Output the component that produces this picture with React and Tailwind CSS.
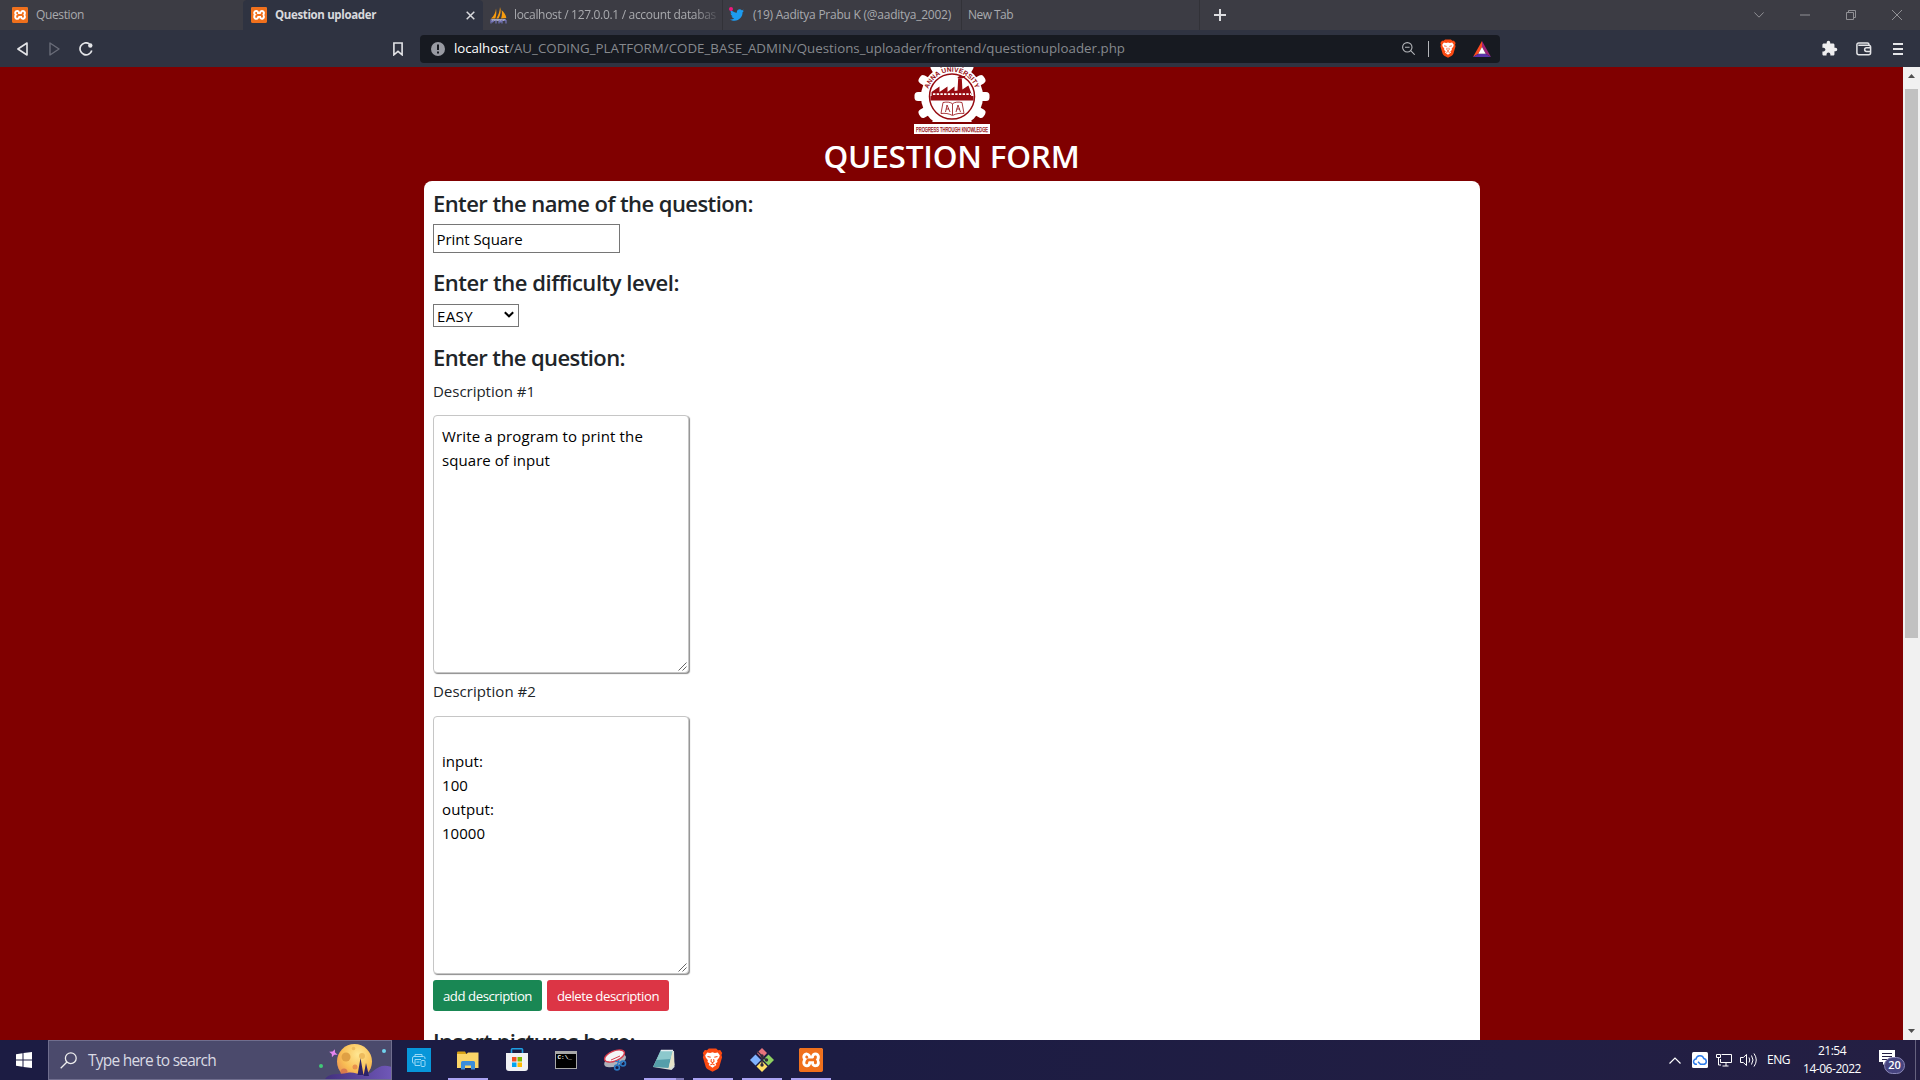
import React, { useLayoutEffect, useRef } from "react";
import { SiXampp } from "react-icons/si";
import { FaTwitter } from "react-icons/fa";
import { MdExtension } from "react-icons/md";

/* A single line of text, tracked so that it spans `w` pixels. */
function Line({ w, className = "", children }) {
  const ref = useRef(null);
  useLayoutEffect(() => {
    const fit = () => {
      const el = ref.current;
      if (!el) return;
      el.style.letterSpacing = "0px";
      const natural = el.getBoundingClientRect().width;
      el.style.letterSpacing = `${(w - natural) / el.textContent.length}px`;
    };
    fit();
    document.fonts.ready.then(fit);
  }, [w]);
  return (
    <span ref={ref} className={`inline-block whitespace-pre ${className}`}>
      {children}
    </span>
  );
}

function XamppIcon({ size }) {
  return (
    <span className="relative flex shrink-0 bg-linear-to-b from-[#f5a060] to-[#ec6a1c] rounded-[2px]">
      <span className="absolute inset-[12%] rounded-[2px] bg-white" />
      <SiXampp size={size} color="#f0701c" className="relative" />
    </span>
  );
}

function BraveIcon({ w, h }) {
  return (
    <svg width={w} height={h} viewBox="0 0 22 26" className="shrink-0">
      <path d="M7 0.5h8l2 2 2.3-.3 2.2 3.3-.8 2.200.7 2.300-3 10.300c-.4 1.200-1.200 2-2.200 2.700L11 25.700 5.800 23c-1-.7-1.800-1.500-2.200-2.700L.6 10l.7-2.300-.8-2.200L2.700 2.200 5 2.500z" fill="#fb4a12" />
      <path d="M11 4.700l2.500.8 3.200-.6 2.200 3-.6 2.400-2.300 3.100.4 1.800-2.200 1.600 1 1.600L11 21.500l-4.200-3.100 1-1.600-2.200-1.600.4-1.800L3.700 10.300 3.100 7.900l2.200-3 3.200.6z" fill="#fff" />
      <path d="M5.600 9.300l3.500.8M16.400 9.300l-3.500.8M9.800 12l-.5 2.500L11 16l1.700-1.500-.5-2.500M8.700 18.400L11 17.200l2.300 1.200" stroke="#fb4a12" strokeWidth="1.100" fill="none" />
    </svg>
  );
}

function SailIcon() {
  return (
    <svg width="17" height="17" viewBox="0 0 17 17" className="shrink-0">
      <path d="M6 1.500C5.800 5 4 9 1 11.500h4.300C6.500 8 6.600 4.500 6 1.500zM10 0c1.500 3.500.5 8-1.500 11.500H6.300C8.500 8 9.800 4 10 0zM11.500 3c2.500 2 4.500 5 4.800 8l-5.300.5c1.200-3 1.200-6 .5-8.500z" fill="#f89c0e" />
      <path d="M1 12.200h15l-1.500 1.500H2z" fill="#c9c9df" />
      <path d="M1 16.500v-3l1.500 1.500L4 13.500M6 13v3.500M9 13.500v3M9 13.500l1.500 1.500 1.500-1.500v3M14 13.500h2v3" stroke="#7474b8" strokeWidth="1.200" fill="none" />
    </svg>
  );
}

function TabStrip() {
  return (
    <div className="flex h-[30px] bg-[#3c3c44] text-[12px] leading-[30px] text-[#a9aaae]">
      <div className="flex w-[243px] items-center pl-3">
        <XamppIcon size={16} />
        <Line w={48} className="ml-2">Question</Line>
      </div>
      <div className="flex w-[240px] items-center rounded-t-[4px] bg-[#2f3341] pl-2 text-[#d8d9dd]">
        <XamppIcon size={16} />
        <Line w={101} className="ml-2 font-bold text-[11.500px]">Question uploader</Line>
        <svg width="9" height="9" viewBox="0 0 9 9" className="ml-[90px]">
          <path d="M.7.7l7.600 7.600M8.300.7L.7 8.300" stroke="#d8d9dd" strokeWidth="1.500" />
        </svg>
      </div>
      <div className="flex w-[239px] items-center pl-[7px]">
        <SailIcon />
        <div className="ml-[7px] w-[206px] overflow-hidden [mask-image:linear-gradient(to_right,black_180px,transparent_208px)]">
          <Line w={202}>localhost / 127.0.0.1 / account databas</Line>
        </div>
      </div>
      <div className="flex w-[239px] items-center border-l border-[#323238] pl-[7px]">
        <div className="relative">
          <FaTwitter size={14} color="#1d9bf0" />
          <span className="absolute -left-px -top-px size-1 rounded-full bg-[#f0187c]" />
        </div>
        <Line w={198} className="ml-[9px]">(19) Aaditya Prabu K (@aaditya_2002)</Line>
      </div>
      <div className="w-[238px] border-l border-[#323238] pl-[6px]">
        <Line w={45}>New Tab</Line>
      </div>
      <div className="flex flex-1 items-center justify-between border-l border-[#323238] pl-[14px] pr-[18px]">
        <svg width="12" height="12" viewBox="0 0 12 12">
          <path d="M6 0v12M0 6h12" stroke="#dcdde0" strokeWidth="2" />
        </svg>
        <div className="flex items-center text-[#909095]">
          <svg width="10" height="6" viewBox="0 0 10 6" className="mr-9" fill="none" stroke="currentColor">
            <path d="M.3.400L5 5.200 9.700.400" />
          </svg>
          <svg width="10" height="2" viewBox="0 0 10 2" className="mr-9">
            <path d="M0 1h10" stroke="currentColor" />
          </svg>
          <svg width="10" height="10" viewBox="0 0 10 10" className="mr-9" fill="none" stroke="currentColor">
            <path d="M.5 2.500h7v7h-7zM2.500 2.500v-2h7v7h-2" />
          </svg>
          <svg width="10" height="10" viewBox="0 0 10 10" fill="none" stroke="currentColor">
            <path d="M0 0l10 10M10 0L0 10" />
          </svg>
        </div>
      </div>
    </div>
  );
}

function Toolbar() {
  return (
    <div className="flex h-[37px] items-center bg-[#2f3341] text-[#e4e5e8]">
      <div className="flex w-[420px] items-center pl-[17px]">
        <svg width="11" height="14" viewBox="0 0 11 14" fill="none" stroke="currentColor" strokeWidth="1.600" strokeLinejoin="round">
          <path d="M10 1v12L.9 7z" />
        </svg>
        <svg width="11" height="14" viewBox="0 0 11 14" className="ml-[21px] text-[#696c78]" fill="none" stroke="currentColor" strokeWidth="1.400" strokeLinejoin="round">
          <path d="M1 1v12L10 7z" />
        </svg>
        <svg width="14" height="14" viewBox="0 0 14 14" className="ml-[19px]" fill="none" stroke="currentColor" strokeWidth="1.700">
          <path d="M10.500 1.900A6 6 0 1 0 12.800 8.500" />
          <circle cx="11.300" cy="3.500" r="2.200" fill="currentColor" stroke="none" />
        </svg>
        <svg width="10" height="14" viewBox="0 0 10 14" className="ml-[300px]" fill="none" stroke="currentColor" strokeWidth="1.600">
          <path d="M.9 1h8.200v11.800L5 9.400.9 12.800z" />
        </svg>
      </div>
      <div className="flex h-7 w-[1080px] items-center rounded-[4px] bg-[#171a21] pl-[11px]">
        <svg width="14" height="14" viewBox="0 0 14 14">
          <circle cx="7" cy="7" r="7" fill="#989aa2" />
          <path d="M7 2.500v5.500M7 9.500v2" stroke="#171a21" strokeWidth="2" />
        </svg>
        <div className="ml-[9px] w-[672px] text-[13.300px] text-[#86898e]">
          <Line w={55} className="text-white">localhost</Line>
          <Line w={616}>/AU_CODING_PLATFORM/CODE_BASE_ADMIN/Questions_uploader/frontend/questionuploader.php</Line>
        </div>
        <svg width="13" height="13" viewBox="0 0 13 13" className="ml-[276px]" fill="none" stroke="#b4b6ba" strokeWidth="1.100">
          <circle cx="5.300" cy="5.300" r="4.700" />
          <path d="M8.700 8.700l4 4M3 5.300h4.600" />
        </svg>
        <span className="ml-[13px] h-4 w-px bg-[#b4b6ba]" />
        <span className="ml-[11px]"><BraveIcon w={16} h={19} /></span>
        <svg width="18" height="16" viewBox="0 0 17 15" className="ml-[17px]">
          <path d="M8.500 0L0 15l5-3 3.500-6.500z" fill="#ff4b20" />
          <path d="M8.500 0L17 15l-5-3-3.500-6.500z" fill="#9e2376" />
          <path d="M0 15h17l-5-3H5z" fill="#5a32a8" />
          <path d="M8.500 5.500L5 12h7z" fill="#fff" />
        </svg>
      </div>
      <div className="flex flex-1 items-center pl-[321px]">
        <MdExtension size={17} color="#eeeeef" />
        <svg width="16" height="14" viewBox="0 0 16 14" className="ml-[18px]" fill="none" stroke="currentColor" strokeWidth="1.500">
          <path d="M13 3.200V2.500A1.600 1.600 0 0 0 11.400 1H2.600A1.700 1.700 0 0 0 .9 2.700v8.100a2 2 0 0 0 2 2h9.700a2 2 0 0 0 2-2V5.200a2 2 0 0 0-2-2H2.300M15 5.700h-4.500a1.800 1.800 0 0 0 0 3.700H15" />
        </svg>
        <svg width="10" height="12" viewBox="0 0 10 12" className="ml-[21px]">
          <path d="M0 1h10M0 6h10M0 11h10" stroke="currentColor" strokeWidth="1.800" />
        </svg>
      </div>
    </div>
  );
}

const TEETH = [30, 60, 90, 120, 150, 180, 210, 240, 270, 300, 330, 0];

function UniversityLogo() {
  return (
    <svg width="76" height="67" viewBox="0 0 76 67" className="mx-auto block overflow-hidden">
      <defs>
        <path id="crest-arc" d="M14.200 22.500A24.800 24.800 0 0 1 61.800 22.500" />
      </defs>
      {TEETH.map((a) => (
        <rect key={a} x="33.500" y="-8" width="9" height="14" rx="3.500" fill="#fff" transform={`rotate(${a} 38 29.500)`} />
      ))}
      <circle cx="38" cy="29.500" r="31" fill="#fff" />
      <circle cx="38" cy="29.500" r="22.500" fill="#fff" stroke="#960a10" strokeWidth="1.500" />
      <path d="M17.500 25l8-5.500V25l8-5.500V25l7-5.500V24l3-.5.700-12h3.600l.6 11 6-4 3 8-.5 4.500H17.500z" fill="#960a10" />
      <path d="M43.500 11c1-3.500 5-1.500 8-2-1 2.500-5 2.500-7 2.500z" fill="#960a10" />
      <path d="M19 27.200h38" stroke="#fff" strokeWidth="1.800" strokeDasharray="2.400 1.300" />
      <path d="M16.500 29h43v4.500h-43z" fill="#960a10" />
      <path d="M29 35.500c4-.8 7-.5 9.500 1.200 2.500-1.700 5.500-2 9.500-1.200l2 11c-4-.5-8 0-11.500 2C35 46.500 31 46 27 46.500zM38.500 37v11M31.500 45l1.500-7 3 7M32 42h3M42 45l2-7 2.500 7M42.500 42h3.500" fill="none" stroke="#960a10" strokeWidth=".8" />
      <text fill="#960a10" fontSize="6.600" fontWeight="700" fontFamily="Liberation Sans, sans-serif">
        <textPath href="#crest-arc" startOffset="0.500" textLength="62">ANNA UNIVERSITY</textPath>
      </text>
      <path d="M0 55h76v2H0z" fill="#800000" />
      <rect y="57" width="76" height="10" fill="#fff" />
      <text x="2" y="64.500" fill="#960a10" stroke="#960a10" strokeWidth=".25" fontSize="7" textLength="72" lengthAdjust="spacingAndGlyphs" fontFamily="Liberation Sans, sans-serif">
        PROGRESS THROUGH KNOWLEDGE
      </text>
    </svg>
  );
}

function Heading({ w, className = "", children }) {
  return (
    <h4 className={`h-[30px] pl-[0.5px] text-[22px] leading-[30px] font-semibold ${className}`}>
      <Line w={w}>{children}</Line>
    </h4>
  );
}

function DescriptionBox({ className = "", children }) {
  return (
    <div className={`relative h-[258px] w-[256px] rounded-[4px] border border-[#c6c6c6] bg-white px-[8.500px] py-2 text-[15px] leading-6 text-black shadow-[1px_1px_1px_#8c8c8c] ${className}`}>
      {children}
      <svg width="9" height="9" viewBox="0 0 9 9" className="absolute bottom-px right-px" stroke="#555" strokeWidth=".9">
        <path d="M.5 8.500l8-8M4.500 8.500l4-4" />
      </svg>
    </div>
  );
}

function QuestionForm() {
  return (
    <div className="h-[859px] w-[1056px] rounded-t-[8px] bg-white pl-[9px] pt-[7px] text-[15px] text-[#212529]">
      <Heading w={320}>Enter the name of the question:</Heading>
      <div className="mt-[6px] h-[29px] w-[187px] border border-[#767676] pl-[3px] leading-[28px] text-black">
        <Line w={86}>Print Square</Line>
      </div>
      <Heading w={246} className="mt-[14px]">Enter the difficulty level:</Heading>
      <div className="mt-[7px] flex h-[23px] w-[86px] items-center justify-between border border-[#767676] pl-[3.500px] pr-1 leading-[23px] text-black">
        <Line w={36} className="pt-px">EASY</Line>
        <svg width="10" height="7" viewBox="0 0 10 7" className="-mt-0.5">
          <path d="M.8 1.200L5 5.300l4.200-4.100" fill="none" stroke="#000" strokeWidth="2" />
        </svg>
      </div>
      <Heading w={192} className="mt-[15px]">Enter the question:</Heading>
      <p className="mt-[6px] h-6 pl-[0.5px] leading-[26px]"><Line w={102}>Description #1</Line></p>
      <DescriptionBox className="mt-[13px]">
        <div><Line w={201}>Write a program to print the</Line></div>
        <div><Line w={108}>square of input</Line></div>
      </DescriptionBox>
      <p className="mt-[6px] h-6 pl-[0.5px] leading-[25px]"><Line w={103}>Description #2</Line></p>
      <DescriptionBox className="mt-[13px]">
        <div className="h-6" />
        <div><Line w={41}>input:</Line></div>
        <div><Line w={26}>100</Line></div>
        <div><Line w={52}>output:</Line></div>
        <div><Line w={43}>10000</Line></div>
      </DescriptionBox>
      <div className="mt-[6px] flex gap-[5px] text-[13.200px] leading-[31px] text-white">
        <button className="h-[31px] w-[109px] rounded-[3px] bg-[#198754] pl-px pt-px"><Line w={89}>add description</Line></button>
        <button className="h-[31px] w-[122px] rounded-[3px] bg-[#dc3545] pl-px pt-px"><Line w={102}>delete description</Line></button>
      </div>
      <Heading w={202} className="mt-[15px]">Insert pictures here:</Heading>
    </div>
  );
}

function Scrollbar() {
  return (
    <div className="flex w-[17px] flex-col items-center justify-between bg-[#f1f1f1]">
      <div className="flex flex-col items-center">
        <svg width="17" height="22" viewBox="0 0 17 22"><path d="M5 11l3.500-4 3.500 4z" fill="#505050" /></svg>
        <div className="h-[549px] w-[13px] bg-[#c1c1c1]" />
      </div>
      <svg width="17" height="17" viewBox="0 0 17 17"><path d="M5 6l3.500 4L12 6z" fill="#505050" /></svg>
    </div>
  );
}

function SearchBox() {
  return (
    <div className="relative flex w-[344px] items-center overflow-hidden border border-[#706e8e] bg-[#4b4a6c] pl-[11px] text-[15.500px] text-[#dadae4]">
      <svg width="17" height="17" viewBox="0 0 17 17" fill="none" stroke="#eee" strokeWidth="1.300">
        <circle cx="10.800" cy="6.200" r="5.400" />
        <path d="M7 10L.7 16.300" />
      </svg>
      <Line w={128} className="ml-[11px] pt-0.5">Type here to search</Line>
      <svg width="76" height="38" viewBox="0 0 76 38" className="absolute -right-px top-0">
        <defs>
          <radialGradient id="moon" cx=".6" cy=".3" r=".75">
            <stop offset="0" stopColor="#ffe793" />
            <stop offset=".6" stopColor="#f9bf55" />
            <stop offset="1" stopColor="#ec9150" />
          </radialGradient>
          <linearGradient id="hill" x1="0" x2="1">
            <stop offset="0" stopColor="#42307e" />
            <stop offset="1" stopColor="#7058b8" />
          </linearGradient>
        </defs>
        <circle cx="38.500" cy="20.500" r="17.500" fill="url(#moon)" />
        <circle cx="30" cy="16" r="4.500" fill="#dfa044" />
        <circle cx="46" cy="15" r="3" fill="#edbb5d" />
        <circle cx="37.500" cy="7.500" r="1.800" fill="#edbb5d" />
        <circle cx="28" cy="31" r="3.500" fill="#d87a4e" />
        <circle cx="39" cy="26" r="2.500" fill="#e8924e" />
        <path d="M9 38c5-7 14-4 22-6 7-2 12 3 20 1 8-1 10-12 25-7v12z" fill="url(#hill)" />
        <path d="M44.500 17l-3 17h6zM50 22l-2.500 13H53z" fill="#2c2268" />
        <path d="M17.500 8l1.300 3 3.200 1.300-3.200 1.200-1.300 3-1.300-3-3.200-1.200 3.200-1.300z" fill="#e585ef" transform="rotate(20 17.500 12)" />
        <circle cx="5" cy="25" r="2" fill="#42c878" />
        <circle cx="68" cy="10" r="2" fill="#70d4ee" />
      </svg>
    </div>
  );
}

function TaskbarApp({ mark = "", children }) {
  return (
    <div className="relative flex w-[49px] items-center justify-center">
      {children}
      {mark && <span className={`absolute bottom-0 h-0.5 bg-[#aaa2f2] ${mark}`} />}
    </div>
  );
}

function Taskbar() {
  return (
    <div className="flex h-10 bg-[#1c1c43]">
      <div className="flex w-12 items-center justify-center">
        <svg width="16" height="16" viewBox="0 0 16 16" fill="#fff">
          <path d="M0 2.300L6.500 1.300v6.200H0zM7.500 1.100L16 0v7.500H7.500zM0 8.500h6.500v6.200L0 13.700zM7.500 8.500H16V16l-8.500-1.100z" />
        </svg>
      </div>
      <SearchBox />
      <div className="flex pl-[2px]">
        <TaskbarApp>
          <svg width="24" height="24" viewBox="0 0 24 24">
            <path d="M0 0h24v24H0z" fill="#0796d9" />
            <g fill="none" stroke="#9bd9f6" strokeWidth="1">
              <path d="M8 8.500V6.500h7V8.500M7.500 15H6.500Q5.500 15 5.500 14V10q0-1.500 1.500-1.500h9.500q1.500 0 1.500 1.500v1M8 17.500v-6h6M9.500 14h3M8 17.500h5" />
              <rect x="14" y="12.500" width="4" height="6" rx="1" />
            </g>
          </svg>
        </TaskbarApp>
        <TaskbarApp mark="w-10">
          <svg width="22" height="19" viewBox="0 0 22 19">
            <path d="M0 1.500Q0 .5 1 .5h7l1.500 2.500H0z" fill="#d9a315" />
            <path d="M0 3h9.500L11 1.500h10.500V17H0z" fill="#fbd568" />
            <path d="M4 18.500v-7q0-1.500 1.500-1.500h11q1.500 0 1.500 1.500v7h-4v-4H8v4z" fill="#3c8ddb" />
          </svg>
        </TaskbarApp>
        <TaskbarApp>
          <svg width="24" height="24" viewBox="0 0 24 24">
            <path d="M6.500 6V1.500Q6.500.8 7.300.8h9.400q.8 0 .8.700V6" fill="none" stroke="#1e9fe4" strokeWidth="1.600" />
            <path d="M1 5h22v15q0 3-3 3H4q-3 0-3-3z" fill="#f0f1f4" />
            <path d="M7 9h4.500v4.500H7z" fill="#f25022" />
            <path d="M12.500 9H17v4.500h-4.500z" fill="#7fba00" />
            <path d="M7 14.500h4.500V19H7z" fill="#00a4ef" />
            <path d="M12.500 14.500H17V19h-4.500z" fill="#ffb900" />
          </svg>
        </TaskbarApp>
        <TaskbarApp>
          <div className="h-[18px] w-[22px] border border-t-[3px] border-[#a8a8a8] bg-black pl-0.5 text-left font-['Liberation_Mono',monospace] text-[6px] font-bold leading-[8px] text-white">C:\_</div>
        </TaskbarApp>
        <TaskbarApp>
          <svg width="25" height="22" viewBox="0 0 25 22" fill="none">
            <ellipse cx="12.500" cy="7.500" rx="11.500" ry="5.500" fill="#aeb2bb" transform="rotate(-22 12.500 7.500) translate(-1 4)" />
            <ellipse cx="12.500" cy="7" rx="10.500" ry="5" fill="#f4f4f6" stroke="#d83a4c" strokeWidth="1.400" transform="rotate(-22 12.500 7)" />
            <path d="M9 11l9-4" stroke="#d83a4c" />
            <path d="M13 12l7 2M15 17l2-6" stroke="#2b78c2" strokeWidth="1.300" />
            <circle cx="21" cy="14.500" r="2.500" stroke="#2b78c2" strokeWidth="1.600" />
            <circle cx="15" cy="18.500" r="2.400" stroke="#2b78c2" strokeWidth="1.600" />
          </svg>
        </TaskbarApp>
        <TaskbarApp mark="w-10">
          <svg width="24" height="22" viewBox="0 0 24 22">
            <path d="M9 1l13 1 .5 16-3 3L1 18z" fill="#d9dfd9" />
            <path d="M9 1l11.500 1-4 17L1 18z" fill="#559eaa" />
            <path d="M9 1l11.500 1-2 8L4.500 11z" fill="#8cc8cc" />
            <path d="M20.500 2l2 14-6 4z" fill="#e6e3c8" />
            <path d="M9 1.500h12" stroke="#e5edf0" strokeWidth="1.500" />
          </svg>
          <span className="absolute bottom-0 right-1 z-10 h-0.5 w-2 bg-[#7b76b4]" />
        </TaskbarApp>
        <TaskbarApp mark="w-10"><BraveIcon w={21} h={24} /></TaskbarApp>
        <TaskbarApp mark="w-10">
          <svg width="24" height="24" viewBox="0 0 24 24">
            <path d="M12 0l5 5-5 5.500L7 5z" fill="#e8747c" />
            <path d="M5.500 6.500l5.500 5.500-5.500 5.500L0 12z" fill="#80b3ff" />
            <path d="M18.500 6.500L24 12l-5.500 5.500L13 12z" fill="#8ed060" />
            <path d="M12 13l5.500 5.500L12 24l-5.500-5.500z" fill="#ffe065" />
            <path d="M7 3l5 5v9M12 8l4 4" stroke="#302c3c" strokeWidth="1.300" fill="none" />
            <circle cx="12" cy="8" r="1.700" fill="#302c3c" />
            <circle cx="12" cy="17" r="1.700" fill="#302c3c" />
            <circle cx="16.500" cy="12" r="1.700" fill="#302c3c" />
          </svg>
        </TaskbarApp>
        <TaskbarApp mark="w-10"><XamppIcon size={24} /></TaskbarApp>
      </div>
      <div className="flex flex-1 items-center justify-end bg-linear-to-r from-[#1c1c43] to-[#241f43] text-[12px] text-white">
        <svg width="12" height="7" viewBox="0 0 12 7" fill="none" stroke="#fff" strokeWidth="1.200"><path d="M.5 6.500L6 1l5.500 5.500" /></svg>
        <svg width="16" height="16" viewBox="0 0 16 16" className="ml-[11px]">
          <rect width="16" height="16" rx="1.500" fill="#fff" />
          <path d="M5 12.300H4.300a2.600 2.600 0 0 1-.3-5.200 4 4 0 0 1 7.800-.6 3 3 0 0 1 .4 5.800H8.500L6 9.800" fill="none" stroke="#2d7bea" strokeWidth="1.500" />
        </svg>
        <svg width="16" height="14" viewBox="0 0 16 14" className="ml-2" fill="none" stroke="#fff">
          <path d="M5.500 1.500h10v8H4.500V6M10 9.500v3.500M6.500 13h6M.5 1.500h4v3h-4zM2.500 4.500V12H5" />
        </svg>
        <svg width="17" height="14" viewBox="0 0 17 14" className="ml-2" fill="none" stroke="#fff">
          <path d="M.5 4.500h2.800L6.500 1.500v11L3.300 9.500H.5zM9 4.500q1.500 2.500 0 5M11.500 2.500q3 4.500 0 9M14 .5q4.500 6.500 0 13" />
        </svg>
        <Line w={23} className="ml-[10px]">ENG</Line>
        <div className="ml-[13px] flex w-[58px] flex-col items-center leading-[18px]">
          <Line w={28}>21:54</Line>
          <Line w={58}>14-06-2022</Line>
        </div>
        <div className="relative ml-[18px] h-[22px] w-[26px]">
          <svg width="16" height="16" viewBox="0 0 16 16" className="mt-px block">
            <path d="M0 0h16v12H7l-3 3v-3H0z" fill="#fff" />
            <path d="M3 3.500h10M3 6.500h10M3 9.500h6" stroke="#241f43" />
          </svg>
          <span className="absolute left-[5px] top-[8px] flex h-[17px] w-[21px] items-center justify-center rounded-full border border-[#8b88b8] bg-[#46437f] text-[11px] font-semibold">20</span>
        </div>
        <span className="ml-[10px] mr-1 h-10 w-px bg-[#66627e]" />
      </div>
    </div>
  );
}

export default function App() {
  return (
    <div className="h-[1080px] w-[1920px] overflow-hidden bg-[#800000] font-['Open_Sans','Noto_Sans',sans-serif]">
      <TabStrip />
      <Toolbar />
      <div className="flex h-[973px] overflow-hidden">
        <main className="flex flex-1 flex-col items-center overflow-hidden">
          <UniversityLogo />
          <h2 className="h-[47px] shrink-0 text-[31.500px] font-semibold leading-[43px] text-white"><Line w={256}>QUESTION FORM</Line></h2>
          <QuestionForm />
        </main>
        <Scrollbar />
      </div>
      <Taskbar />
    </div>
  );
}
